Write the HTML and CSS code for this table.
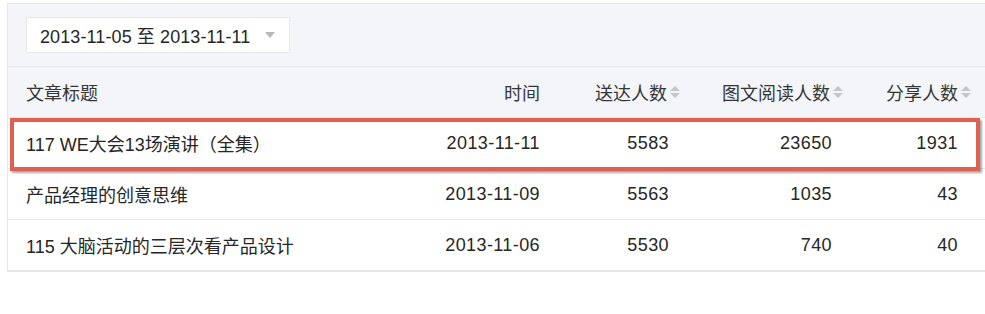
FILE: index.html
```html
<!DOCTYPE html>
<html lang="zh">
<head>
<meta charset="utf-8">
<link rel="stylesheet" href="styles.css">
</head>
<body>
<div class="panel">
  <div class="toolbar">
    <div class="picker">
      <span class="picker-text">2013-11-05 至 2013-11-11</span>
      <span class="caret"></span>
    </div>
  </div>
  <div class="table">
    <div class="row head">
      <div class="cell title">文章标题</div>
      <div class="cell date">时间</div>
      <div class="cell num"><span>送达人数</span><i class="sort"></i></div>
      <div class="cell num"><span>图文阅读人数</span><i class="sort"></i></div>
      <div class="cell num"><span>分享人数</span><i class="sort"></i></div>
    </div>
    <div class="row body marked">
      <div class="cell title">117 WE大会13场演讲（全集）</div>
      <div class="cell date">2013-11-11</div>
      <div class="cell num">5583</div>
      <div class="cell num">23650</div>
      <div class="cell num">1931</div>
    </div>
    <div class="row body">
      <div class="cell title">产品经理的创意思维</div>
      <div class="cell date">2013-11-09</div>
      <div class="cell num">5563</div>
      <div class="cell num">1035</div>
      <div class="cell num">43</div>
    </div>
    <div class="row body">
      <div class="cell title">115 大脑活动的三层次看产品设计</div>
      <div class="cell date">2013-11-06</div>
      <div class="cell num">5530</div>
      <div class="cell num">740</div>
      <div class="cell num">40</div>
    </div>
  </div>
</div>
</body>
</html>
```
FILE: styles.css
```css
html, body {
  margin: 0;
  padding: 0;
  background: #fff;
}
body {
  font-family: "Liberation Sans", "Noto Sans CJK SC", sans-serif;
  font-size: 18px;
  color: #262626;
}
.panel {
  margin: 3px 0 0 7px;
  border: 1px solid #e7e7eb;
  border-right: none;
}
.toolbar {
  background: #f4f5f9;
  padding: 13px 18px;
  border-bottom: 1px solid #e7e7eb;
}
.picker {
  display: inline-flex;
  align-items: center;
  height: 34px;
  padding: 0 14px 0 13px;
  background: #fff;
  border: 1px solid #e7e7eb;
}
.picker-text {
  color: #262626;
  letter-spacing: 0.1px;
}
.caret {
  width: 0;
  height: 0;
  margin-left: 15px;
  border-left: 5px solid transparent;
  border-right: 5px solid transparent;
  border-top: 6px solid #b8b8b8;
}
.row {
  display: grid;
  grid-template-columns: 412px 120px 140px 163px 1fr;
  align-items: center;
  height: 50px;
  border-bottom: 1px solid #e7e7eb;
}
.head {
  background: #f4f5f9;
  color: #353535;
}
.body {
  background: #fff;
}
.cell {
  white-space: nowrap;
}
.title {
  padding-left: 18px;
}
.date {
  text-align: right;
}
.body .date,
.body .num {
  letter-spacing: 0.4px;
}
.num {
  text-align: right;
  padding-right: 11px;
}
.head .num {
  display: flex;
  justify-content: flex-end;
  align-items: center;
  padding-right: 0;
}
.row .cell:last-child {
  padding-right: 27px;
}
.head .cell:last-child {
  padding-right: 14px;
}
.sort {
  display: inline-flex;
  flex-direction: column;
  justify-content: center;
  width: 10px;
  height: 12px;
  margin-left: 3px;
}
.sort::before,
.sort::after {
  content: "";
  width: 0;
  height: 0;
  border-left: 5px solid transparent;
  border-right: 5px solid transparent;
}
.sort::before {
  border-bottom: 5px solid #c6c6c6;
  margin-bottom: 2px;
}
.sort::after {
  border-top: 5px solid #c6c6c6;
}
.marked {
  position: relative;
}
.marked::after {
  content: "";
  position: absolute;
  left: 2px;
  right: 5px;
  top: 0;
  bottom: -3px;
  border: 4px solid #e0604f;
  box-shadow: 2px 2px 2px rgba(0, 0, 0, 0.35);
}
```
